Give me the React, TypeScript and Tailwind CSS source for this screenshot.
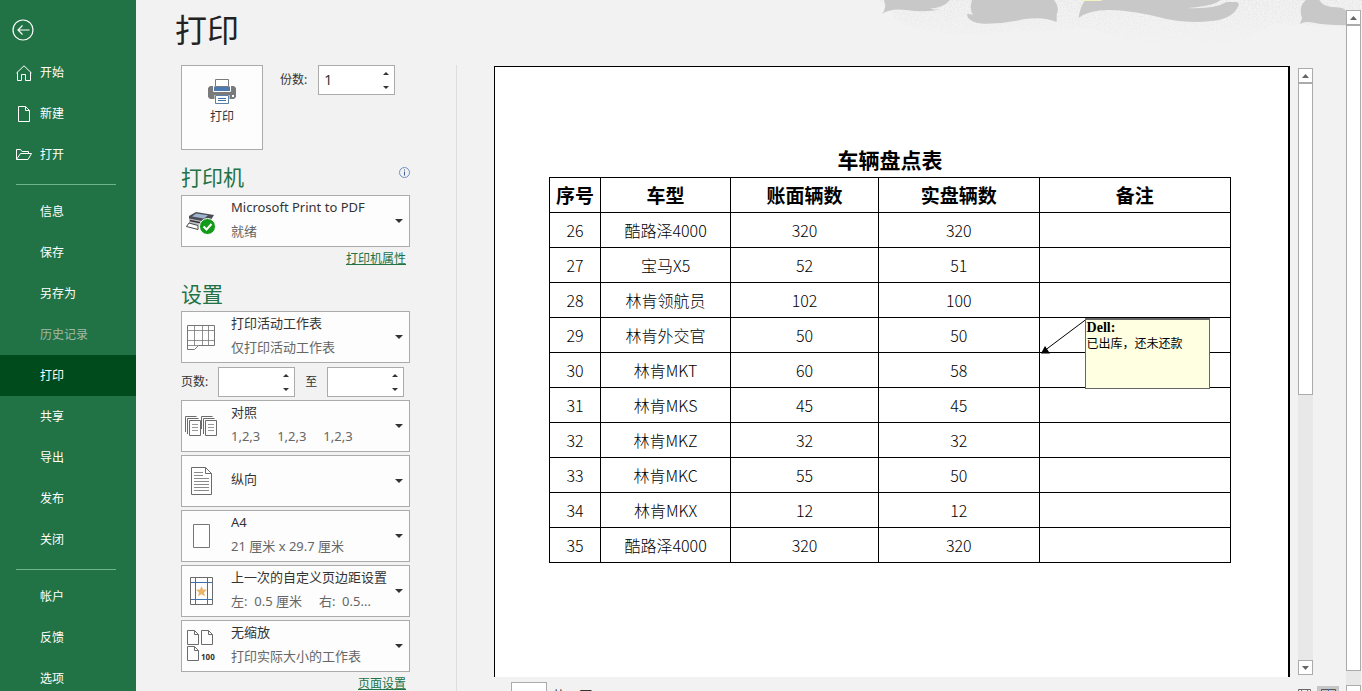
import { useState } from 'react';
import type { ReactNode } from 'react';
import clsx from 'clsx';

interface NavItem {
  label: string;
  icon?: ReactNode;
  disabled?: boolean;
  active?: boolean;
}

interface OptionProps {
  label: string;
  title: string;
  detail?: string;
  icon: ReactNode;
}

interface SpinnerProps {
  id: string;
  label: string;
  initial?: string;
}

const HomeIcon = () => (
  <svg width="16" height="16" viewBox="0 0 16 16" fill="none" stroke="currentColor">
    <path d="M.5 8 8 .8 15.500 8M1.500 7.200v8.300h4V9.500h4v6h5V7.200" />
  </svg>
);

const NewIcon = () => (
  <svg width="16" height="16" viewBox="0 0 16 16" fill="none" stroke="currentColor">
    <path d="M2.500.5h7l4 4v11h-11zM9.500.5v4h4" />
  </svg>
);

const OpenIcon = () => (
  <svg width="16" height="16" viewBox="0 0 16 16" fill="none" stroke="currentColor">
    <path d="M.5 12.500v-10h4l1.500 2h6.500v2M.5 12.500l4-6h11l-3.500 6z" />
  </svg>
);

const mainItems: NavItem[] = [
  { label: '开始', icon: <HomeIcon /> },
  { label: '新建', icon: <NewIcon /> },
  { label: '打开', icon: <OpenIcon /> },
];

const fileItems: NavItem[] = [
  { label: '信息' },
  { label: '保存' },
  { label: '另存为' },
  { label: '历史记录', disabled: true },
  { label: '打印', active: true },
  { label: '共享' },
  { label: '导出' },
  { label: '发布' },
  { label: '关闭' },
];

const accountItems: NavItem[] = [
  { label: '帐户' },
  { label: '反馈' },
  { label: '选项' },
];

const rows = [
  ['26', '酷路泽4000', '320', '320'],
  ['27', '宝马X5', '52', '51'],
  ['28', '林肯领航员', '102', '100'],
  ['29', '林肯外交官', '50', '50'],
  ['30', '林肯MKT', '60', '58'],
  ['31', '林肯MKS', '45', '45'],
  ['32', '林肯MKZ', '32', '32'],
  ['33', '林肯MKC', '55', '50'],
  ['34', '林肯MKX', '12', '12'],
  ['35', '酷路泽4000', '320', '320'],
];

function NavGroup({ items }: { items: NavItem[] }) {
  return (
    <ul>
      {items.map(({ label, icon, disabled, active }) => (
        <li key={label}>
          <button
            type="button"
            disabled={disabled}
            className={clsx(
              'flex h-[41px] w-full items-center pl-4 text-left text-xs',
              active && 'bg-[#004b1c]',
              disabled ? 'text-[#a3b8ab]' : 'text-white',
            )}>
            <span className="w-6">{icon}</span>
            {label}
          </button>
        </li>
      ))}
    </ul>
  );
}

function Sidebar() {
  return (
    <nav className="flex w-[136px] shrink-0 flex-col overflow-hidden bg-[#217346]">
      <div className="flex h-[52px] shrink-0 items-center pt-2 pl-3">
        <button type="button" aria-label="返回" className="text-white">
          <svg width="22" height="22" viewBox="0 0 22 22" fill="none" stroke="currentColor" strokeWidth="1.200">
            <circle cx="11" cy="11" r="10" />
            <path d="M17.500 11H6.200M10.500 6.500 6 11l4.500 4.500" />
          </svg>
        </button>
      </div>
      <NavGroup items={mainItems} />
      <hr className="mt-[9px] mr-5 mb-[6px] ml-4 border-[#6fb58a]" />
      <NavGroup items={fileItems} />
      <hr className="mt-[9px] mr-5 mb-[6px] ml-4 border-[#6fb58a]" />
      <NavGroup items={accountItems} />
    </nav>
  );
}

function Spinner({ id, label, initial = '' }: SpinnerProps) {
  const [value, setValue] = useState(initial);

  const step = (amount: number) => {
    setValue(String(Math.max(1, (Number(value) || 0) + amount)));
  };

  return (
    <>
      <label htmlFor={id} className="text-xs">
        {label}
      </label>
      <div className="flex h-[30px] w-[77px] border border-[#ababab] bg-white">
        <input
          id={id}
          type="text"
          inputMode="numeric"
          value={value}
          onChange={(e) => setValue(e.target.value)}
          className="w-[59px] bg-transparent pl-[5px] text-sm outline-none"
        />
        <div className="flex flex-1 flex-col">
          <button type="button" aria-label="增加" onClick={() => step(1)} className="flex flex-1 items-center justify-center">
            <svg width="6" height="3" viewBox="0 0 6 3" fill="#333">
              <path d="M3 0 6 3H0z" />
            </svg>
          </button>
          <button type="button" aria-label="减少" onClick={() => step(-1)} className="flex flex-1 items-center justify-center">
            <svg width="6" height="3" viewBox="0 0 6 3" fill="#333">
              <path d="M0 0h6L3 3z" />
            </svg>
          </button>
        </div>
      </div>
    </>
  );
}

function Option({ label, title, detail, icon }: OptionProps) {
  return (
    <div className="flex h-[52px] items-center border border-[#ababab] bg-[#fdfdfd]">
      <div className="flex w-[38px] shrink-0 justify-center">{icon}</div>
      <div className="ml-[11px] flex min-w-0 flex-1 flex-col pb-1 text-[13px] leading-6">
        <select aria-label={label} className="h-6 w-full appearance-none bg-transparent text-[#333] outline-none">
          <option>{title}</option>
        </select>
        {detail && <p className="truncate whitespace-pre text-[#666]">{detail}</p>}
      </div>
      <svg className="mr-[6px] ml-1 shrink-0" width="8" height="4" viewBox="0 0 8 4" fill="#333">
        <path d="M0 0h8L4 4z" />
      </svg>
    </div>
  );
}

const PrintIcon = () => (
  <svg width="28" height="25" viewBox="0 0 28 25">
    <path d="M2 7h24l2 2v9l-2 2H2l-2-2V9z" fill="#7a7a7a" />
    <path d="M5.500 7v5.500h17V7z" fill="#4a7ab0" stroke="#fff" />
    <path d="M7.500.5h13v7h-13z" fill="#fff" stroke="#7a7a7a" />
    <path d="M6.500 16h15v9h-15z" fill="#fff" />
    <path d="M7.500 16.500h13v8h-13z" fill="#fff" stroke="#5b7fa8" />
    <path d="M10 19.500h8M10 21.500h8" stroke="#3f72ad" />
    <rect x="24" y="16" width="2" height="2" fill="#fff" />
  </svg>
);

const PrinterIcon = () => (
  <svg className="mt-1" width="30" height="24" viewBox="0 0 30 24">
    <path d="M3 5 10 1l18 3-5 8L3 8z" fill="#4b4d55" />
    <path d="M10 2.500 22 4.200l-4 3.300-12-2z" fill="#9db4cf" />
    <path d="M3 7.500 21 11v6L3 12z" fill="#bfc1c5" />
    <path d="M4 9.500 18 12.500" stroke="#333" strokeWidth="1.500" />
    <path d="M3 12 .5 15.500 12 18.500v-4z" fill="#fff" stroke="#444" />
    <circle cx="21.500" cy="15.500" r="8" fill="#139a1a" stroke="#fff" />
    <path d="m17.500 15.500 3 3 5-5.500" fill="none" stroke="#fff" strokeWidth="2" />
  </svg>
);

const SheetIcon = () => (
  <svg width="28" height="25" viewBox="0 0 28 25" fill="none" stroke="#767676">
    <path d="M.5.500h27v20h-16l-4 4h-7z" fill="#fff" />
    <path d="M.5 5.500h27M.5 15.500h27M7.500.5v20M15.500.5v20M21.500.5v20M.5 20.500h11" strokeWidth=".8" />
  </svg>
);

const CollateIcon = () => (
  <svg width="32" height="20" viewBox="0 0 32 20" fill="none" stroke="#6b6b6b">
    <path d="M.5 16V.5h11M2.500 18V2.500h11M4.500 4.500h11v15h-11z" />
    <path d="M16.500 13V.5h11M18.500 18V2.500h11M20.500 4.500h11v15h-11z" />
    <path d="M7 8.500h6M7 11.500h6M7 14.500h6M23 8.500h6M23 11.500h6M23 14.500h6" stroke="#999" />
  </svg>
);

const PortraitIcon = () => (
  <svg width="21" height="28" viewBox="0 0 21 28" fill="none" stroke="#6b6b6b">
    <path d="M.5.500h14l6 6v21H.5zM14.500.5v6h6" fill="#fff" />
    <path d="M3 5.500h9M3 8.500h9M3 11.500h15M3 14.500h15M3 17.500h15M3 20.500h15M3 23.500h15" stroke="#8a8a8a" />
  </svg>
);

const PaperIcon = () => (
  <svg width="17" height="24" viewBox="0 0 17 24">
    <path d="M.5.500h16v23H.5z" fill="#fff" stroke="#767676" />
  </svg>
);

const MarginIcon = () => (
  <svg width="23" height="28" viewBox="0 0 23 28" fill="none">
    <path d="M.5.500h22v27H.5z" fill="#fff" stroke="#6b6b6b" />
    <path d="M5.500 1v26M17.500 1v26M1 5.500h21M1 22.500h21" stroke="#3f72ad" />
    <path d="m11.500 9 1.500 3.500 4 .3-3 2.600 1 3.800-3.500-2-3.500 2 1-3.800-3-2.600 4-.3z" fill="#ecb469" />
  </svg>
);

const ScaleIcon = () => (
  <svg width="30" height="32" viewBox="0 0 30 32" fill="none" stroke="#6b6b6b">
    <path d="M1.500.5h7l4 4v10h-11zM8.500.5v4h4" />
    <path d="M15.500.5h7l4 4v10h-11zM22.500.5v4h4" />
    <path d="M1.500 16.500h7l4 4v10h-11zM8.500 16.500v4h4" />
    <text x="15" y="30" fill="#333" stroke="none" fontSize="8" fontWeight="700" fontFamily="Noto Sans, sans-serif">
      100
    </text>
  </svg>
);

function Settings() {
  return (
    <section className="w-[229px] shrink-0 text-[#333]">
      <div className="flex items-start">
        <button
          type="button"
          className="flex h-[85px] w-[82px] flex-col items-center border border-[#ababab] bg-[#fdfdfd] pt-[13px] text-xs">
          <PrintIcon />
          <span className="mt-[5px]">打印</span>
        </button>
        <div className="ml-[17px] flex items-center gap-[11px]">
          <Spinner id="copies" label="份数:" initial="1" />
        </div>
      </div>

      <div className="mt-[11px] flex h-[34px] items-center justify-between">
        <h2 className="text-[21px] text-[#217346]">打印机</h2>
        <button type="button" aria-label="打印机信息" className="mb-3">
          <svg width="11" height="11" viewBox="0 0 11 11" fill="none" stroke="#6f8fc4">
            <circle cx="5.500" cy="5.500" r="5" />
            <path d="M5.500 2.500v1M5.500 4.500v4" stroke="#3f5f94" />
          </svg>
        </button>
      </div>
      <Option label="打印机" title="Microsoft Print to PDF" detail="就绪" icon={<PrinterIcon />} />
      <div className="flex h-6 items-center justify-end pr-1">
        <a href="#printer" className="text-xs text-[#217346] underline">
          打印机属性
        </a>
      </div>

      <h2 className="mt-[6px] h-[34px] text-[21px] leading-[34px] text-[#217346]">设置</h2>
      <Option label="打印范围" title="打印活动工作表" detail="仅打印活动工作表" icon={<SheetIcon />} />
      <div className="mt-1 mb-[3px] flex items-center gap-[10px]">
        <Spinner id="page-from" label="页数:" />
        <Spinner id="page-to" label="至" />
      </div>
      <div className="flex flex-col gap-[3px]">
        <Option label="对照" title="对照" detail="1,2,3     1,2,3     1,2,3" icon={<CollateIcon />} />
        <Option label="方向" title="纵向" icon={<PortraitIcon />} />
        <Option label="纸张大小" title="A4" detail="21 厘米 x 29.7 厘米" icon={<PaperIcon />} />
        <Option label="页边距" title="上一次的自定义页边距设置" detail="左:  0.5 厘米     右:  0.5..." icon={<MarginIcon />} />
        <Option label="缩放" title="无缩放" detail="打印实际大小的工作表" icon={<ScaleIcon />} />
      </div>
      <div className="flex h-6 items-center justify-end pr-1">
        <a href="#page-setup" className="text-xs text-[#217346] underline">
          页面设置
        </a>
      </div>
    </section>
  );
}

function ScrollButton({ down = false }: { down?: boolean }) {
  return (
    <button
      type="button"
      aria-label={down ? '向下滚动' : '向上滚动'}
      className="flex h-[15px] shrink-0 items-center justify-center border border-[#ababab] bg-white">
      <svg width="7" height="4" viewBox="0 0 7 4" fill="#666">
        <path d={down ? 'M0 0h7L3.500 4z' : 'M3.500 0 7 4H0z'} />
      </svg>
    </button>
  );
}

function Comment() {
  return (
    <div className="absolute top-0 left-0">
      <svg className="absolute top-0 left-0" width="46" height="36" viewBox="0 0 46 36">
        <path d="M46 1.500 6 31.500" stroke="#000" />
        <path d="M1 35.500 5 28l5 7.500z" fill="#000" />
      </svg>
      <div className="absolute top-0 left-[45px] h-[71px] w-[125px] border border-t-2 border-[#666] bg-[#ffffe1] pl-px text-left text-xs leading-[15px]">
        <p className="font-['Liberation_Serif','Noto_Sans_CJK_SC',serif] text-sm leading-[15px] font-bold">Dell:</p>
        <p className="whitespace-nowrap">已出库，还未还款</p>
      </div>
    </div>
  );
}

function Preview() {
  return (
    <section className="flex min-w-0 flex-1 flex-col border-l border-[#dedede] pl-[37px]">
      <div className="mt-px flex min-h-0 flex-1 gap-2 pr-[33px]">
        <div className="min-w-0 flex-1 overflow-hidden border-t border-r-2 border-l border-black bg-white pt-[76px] pr-[57px] pl-[54px] font-['Noto_Sans_CJK_SC',sans-serif] text-black">
          <table className="w-full table-fixed border-collapse text-center">
            <caption className="h-[34px] text-[21px] leading-8 font-bold">车辆盘点表</caption>
            <colgroup>
              <col className="w-[7.500%]" />
              <col className="w-[19.100%]" />
              <col className="w-[21.700%]" />
              <col className="w-[23.600%]" />
              <col />
            </colgroup>
            <thead>
              <tr className="h-[35px] text-[19px] leading-7">
                {['序号', '车型', '账面辆数', '实盘辆数', '备注'].map((head) => (
                  <th key={head} scope="col" className="border border-black p-0 font-bold">
                    {head}
                  </th>
                ))}
              </tr>
            </thead>
            <tbody>
              {rows.map((row) => (
                <tr key={row[0]} className="h-[35px] text-base leading-6 font-light">
                  {row.map((cell, index) => (
                    <td key={index} className="border border-black p-0">
                      {cell}
                    </td>
                  ))}
                  <td className="relative border border-black p-0 font-normal">{row[0] === '29' && <Comment />}</td>
                </tr>
              ))}
            </tbody>
          </table>
        </div>
        <div className="mt-[2px] mb-[2px] flex w-[15px] shrink-0 flex-col bg-[#e8e8e8]">
          <ScrollButton />
          <div className="flex-1">
            <div className="h-[54%] border border-[#ababab] bg-white" />
          </div>
          <ScrollButton down />
        </div>
      </div>
      <footer className="flex h-[14px] shrink-0 items-start overflow-hidden pr-[7px] pl-[17px] text-[#333]">
        <input
          type="text"
          aria-label="当前页"
          className="mt-[5px] h-6 w-9 shrink-0 border border-[#ababab] bg-white text-center text-xs"
        />
        <span className="mt-2 ml-[5px] text-[13px] leading-5">共 2 页</span>
        <div className="mt-[9px] ml-auto flex gap-[2px]">
          <button type="button" aria-label="显示边距" className="flex h-5 w-[22px] justify-center pt-[3px]">
            <svg width="13" height="13" viewBox="0 0 13 13" fill="none" stroke="#666">
              <path d="M.5.500h12v12H.5z" />
              <path d="M3.500 0v13M9.500 0v13" stroke="#3f72ad" />
            </svg>
          </button>
          <button type="button" aria-label="缩放到页面" className="flex h-5 w-[22px] justify-center bg-[#c6c6c6] pt-[3px]">
            <svg width="15" height="13" viewBox="0 0 15 13" fill="none" stroke="#555">
              <path d="M.5.500h14v12H.5z" />
              <path d="M7.500 0v5M5 3h5" stroke="#3f72ad" />
            </svg>
          </button>
        </div>
      </footer>
    </section>
  );
}

/* Ink-cloud banner in the window's top corner */
function Banner() {
  return (
    <svg className="pointer-events-none absolute top-0 right-0" width="502" height="50" viewBox="0 0 1506 150">
      <defs>
        <filter id="grain" x="0" y="0" width="100%" height="100%">
          <feTurbulence type="fractalNoise" baseFrequency=".25" numOctaves="2" seed="4" />
          <feColorMatrix values="0 0 0 0 .75  0 0 0 0 .75  0 0 0 0 .75  4 0 0 0 -1.700" />
          <feComposite in2="SourceGraphic" operator="in" />
        </filter>
        <linearGradient id="fade" x1="0" y1="0" x2="0" y2="1">
          <stop offset="0" stopColor="#000" stopOpacity=".6" />
          <stop offset="1" stopColor="#000" stopOpacity="0" />
        </linearGradient>
      </defs>
      <path d="M60 0h1446v90l-260-20-120 60-120 15-200-20-120-40-420 20-140-30z" fill="url(#fade)" filter="url(#grain)" />
      <g fill="#c8c8c8">
        <path d="M72 0h198q-20 24-60 26 20 4 34 2-50 10-104 2-50-6-74 12 16-20 6-42z" />
        <path d="M336 0h246q18 24 8 42v24q-40-18-100-8-60 14-120 13-48-4-49-30l18 3q-12-16-3-44z" />
        <path d="M676 0h406q-20 18-100 24 80 4 118-18h28q14 2 4 18-20 36-86 40-60 6-130-8-100-26-170-26-60 0-90 24 4-34 20-54z" />
        <path d="M1338 0h40q10 22 50 22 20 0 30 10v44q-70-2-96-8-28-6-42 4l6-18q-12-34 12-54z" />
      </g>
      <path d="M664 0h64l-6 3h-60z" fill="#f1f3c6" />
    </svg>
  );
}

export default function App() {
  return (
    <div className="flex h-screen overflow-hidden bg-[#f2f2f2] font-['Noto_Sans','Noto_Sans_CJK_SC',sans-serif]">
      <Sidebar />
      <main className="relative flex min-w-0 flex-1 pr-px">
        <Banner />
        <div className="relative flex min-w-0 flex-1 flex-col">
          <h1 className="h-[65px] shrink-0 pl-[39px] text-[32px] leading-[60px] text-[#222]">打印</h1>
          <div className="flex min-h-0 flex-1 gap-[46px] pl-[45px]">
            <Settings />
            <Preview />
          </div>
        </div>
        <div className="relative mt-[10px] flex w-[15px] shrink-0 flex-col overflow-hidden bg-[#e8e8e8]">
          <ScrollButton />
          <div className="mb-[14px] flex-1 border border-[#ababab] bg-white" />
          <div className="flex h-[6px] flex-col overflow-hidden">
            <ScrollButton down />
          </div>
        </div>
      </main>
    </div>
  );
}
